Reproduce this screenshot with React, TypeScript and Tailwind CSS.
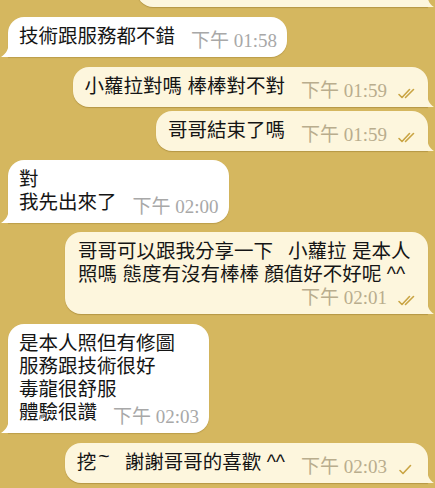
import React from "react";

const FONT = { fontFamily: '"Liberation Sans", "Noto Sans CJK TC", sans-serif' };
const TS_FONT = { fontFamily: '"Liberation Serif", "Noto Sans CJK TC", serif' };

function Tail({ out }: { out: boolean }) {
  return out ? (
    <svg className="absolute bottom-0 right-[-6px]" width="7" height="16" viewBox="0 0 7 16">
      <path d="M0 0 C0 8 2 13 7 16 H0 Z" fill="#fdf6dd" />
    </svg>
  ) : (
    <svg className="absolute bottom-0 left-[-7px]" width="8" height="16" viewBox="0 0 8 16">
      <path d="M8 0 C8 8 5 13 0 16 H8 Z" fill="#ffffff" />
    </svg>
  );
}

function Checks({ double }: { double: boolean }) {
  return (
    <svg width="20" height="12" viewBox="0 0 20 12" className="ml-[10px] mb-[1px] shrink-0">
      {double ? (
        <path d="M2 7.5 L5 10.5 L12.5 2.5 M8.5 10.5 L16.5 2.5" stroke="#c9a443" strokeWidth="1.6" fill="none" strokeLinecap="round" strokeLinejoin="round" />
      ) : (
        <path d="M3 7.5 L6 10.5 L13.5 2.5" stroke="#c9a443" strokeWidth="1.6" fill="none" strokeLinecap="round" strokeLinejoin="round" />
      )}
    </svg>
  );
}

function Time({ t, out, double }: { t: string; out: boolean; double?: boolean }) {
  return (
    <div className="flex items-end shrink-0 ml-[16px] translate-y-[2px]">
      <span
        className={`text-[19px] leading-[18px] whitespace-pre ${out ? "text-[#b9ad8d]" : "text-[#a8a8a8]"}`}
        style={TS_FONT}
      >
        {t}
      </span>
      {out && <Checks double={!!double} />}
    </div>
  );
}

function Body({ lines, t, out, double }: { lines: React.ReactNode[]; t: string; out: boolean; double?: boolean }) {
  const head = lines.slice(0, -1);
  const last = lines[lines.length - 1];
  return (
    <div className="flex flex-col text-[19.5px] leading-[23px] text-[#151515] whitespace-pre" style={FONT}>
      {head.map((l, i) => (
        <div key={i}>{l}</div>
      ))}
      <div className="flex items-end">
        <div>{last}</div>
        <Time t={t} out={out} double={double} />
      </div>
    </div>
  );
}

function In({ lines, t, mt }: { lines: React.ReactNode[]; t: string; mt: string }) {
  return (
    <div className={`relative self-start bg-white rounded-[16px] rounded-bl-none pl-[11px] pr-[10px] pt-[8px] pb-[9px] shadow-[0_1px_1px_rgba(110,80,10,0.25)] ${mt}`}>
      <Body lines={lines} t={t} out={false} />
      <Tail out={false} />
    </div>
  );
}

function Out({ lines, t, mt, double = true, stacked = false }: { lines: React.ReactNode[]; t: string; mt: string; double?: boolean; stacked?: boolean }) {
  return (
    <div className={`relative self-end bg-[#fdf6dd] rounded-[16px] rounded-br-none pl-[12px] pr-[11px] pt-[8px] pb-[9px] shadow-[0_1px_1px_rgba(110,80,10,0.3)] ${stacked ? "w-[363px] pl-[13px]" : ""} ${mt}`}>
      {stacked ? (
        <div>
          <div className="text-[19.5px] leading-[23px] text-[#151515] whitespace-pre" style={FONT}>
            {lines.map((l, i) => (
              <div key={i}>{l}</div>
            ))}
          </div>
          <div className="flex justify-end h-[19px] items-end">
            <Time t={t} out={true} double={double} />
          </div>
        </div>
      ) : (
        <Body lines={lines} t={t} out={true} double={double} />
      )}
      <Tail out={true} />
    </div>
  );
}

export default function App() {
  return (
    <div className="w-[435px] h-[488px] overflow-hidden bg-[#d5b75f] flex flex-col pl-[8px] pr-[7px]">
      <div className="relative self-end w-[291px] h-[40px] mt-[-33px] bg-[#fdf6dd] rounded-[16px] rounded-br-none shadow-[0_1px_1px_rgba(110,80,10,0.3)]">
        <Tail out={true} />
      </div>
      <In lines={["技術跟服務都不錯"]} t="下午 01:58" mt="mt-[10px]" />
      <Out lines={["小蘿拉對嗎 棒棒對不對"]} t="下午 01:59" mt="mt-[10px]" />
      <Out lines={["哥哥結束了嗎"]} t="下午 01:59" mt="mt-[4px]" />
      <In lines={["對", "我先出來了"]} t="下午 02:00" mt="mt-[9px]" />
      <Out
        lines={[
          <>
            哥哥可以跟我分享一下<span className="inline-block w-[15px]"> </span>小蘿拉 是本人
          </>,
          "照嗎 態度有沒有棒棒 顏值好不好呢 ^^",
        ]}
        t="下午 02:01"
        mt="mt-[9px]"
        stacked
      />
      <In lines={["是本人照但有修圖", "服務跟技術很好", "毒龍很舒服", "體驗很讚"]} t="下午 02:03" mt="mt-[10px]" />
      <Out
        lines={[
          <>
            挖<span className="relative top-[-6px] ml-[2px]">~</span><span className="inline-block w-[15px]"> </span>謝謝哥哥的喜歡 ^^
          </>,
        ]}
        t="下午 02:03"
        mt="mt-[10px]"
        double={false}
      />
    </div>
  );
}
